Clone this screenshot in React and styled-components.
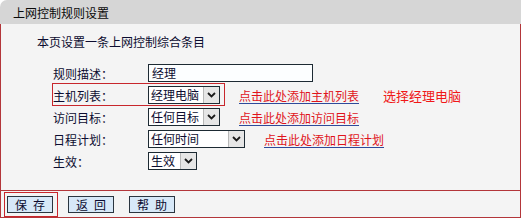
import React from "react";
import styled, { createGlobalStyle } from "styled-components";

const GlobalStyle = createGlobalStyle`
  html, body {
    margin: 0;
    padding: 0;
    background: #ffffff;
  }
  body {
    font-family: "Noto Sans CJK SC", "Liberation Sans", sans-serif;
    font-size: 12px;
    color: #0c0c30;
  }
`;

const Page = styled.div`
  width: 521px;
  display: flex;
  flex-direction: column;
`;

const Header = styled.div`
  height: 24px;
  background: #d6d6d6;
  border-top-left-radius: 7px;
  display: flex;
  align-items: center;
  padding-left: 13px;
  font-size: 12px;
  color: #0a0a0a;
`;

const Panel = styled.div`
  background: #f4f4f4;
  border-left: 1px solid #b3363a;
  border-right: 1px solid #b3363a;
  display: flex;
  flex-direction: column;
`;

const Body = styled.div`
  height: 167px;
  padding-top: 9px;
  box-sizing: border-box;
  border-bottom: 1px solid #b3363a;
  display: flex;
  flex-direction: column;
`;

const Intro = styled.div`
  padding-left: 36px;
  height: 17px;
  line-height: 17px;
  margin-bottom: 14px;
`;

const Rows = styled.div`
  display: flex;
  flex-direction: column;
  padding-left: 52px;
  gap: 4px;
`;

const Row = styled.div`
  display: flex;
  align-items: center;
  height: 18px;
`;

const Group = styled.div`
  position: relative;
  display: flex;
  align-items: center;
  height: 100%;

  ${(p) =>
    p.$mark &&
    `
    &::after {
      content: "";
      position: absolute;
      left: -1px;
      right: -5px;
      top: -3px;
      bottom: -2px;
      border: 1px solid #c8262c;
      pointer-events: none;
    }
  `}
`;

const Label = styled.span`
  width: 95px;
  white-space: nowrap;
`;

const TextBox = styled.div`
  width: 160px;
  height: 16px;
  background: #fcfeff;
  border: 1px solid #1d2a33;
  padding-left: 3px;
  line-height: 16px;
  font-size: 12px;
`;

const Select = styled.div`
  width: ${(p) => p.$w}px;
  height: 16px;
  background: #ffffff;
  border: 1px solid #1d2a33;
  display: flex;
  align-items: stretch;
`;

const SelectText = styled.span`
  flex: 1;
  padding-left: 2px;
  line-height: 16px;
  font-size: 12px;
  white-space: nowrap;
`;

const Arrow = styled.span`
  width: 15px;
  background: #e6e6e6;
  border-left: 1px solid #b8b8b8;
  display: flex;
  align-items: center;
  justify-content: center;
`;

const Link = styled.a`
  margin-left: 19px;
  color: #e0141c;
  text-decoration: underline;
  text-decoration-color: #2e4a9a;
  text-underline-offset: 2px;
  white-space: nowrap;
  cursor: pointer;
`;

const Note = styled.span`
  margin-left: 24px;
  color: #f01818;
  font-size: 13px;
  white-space: nowrap;
`;

const ButtonBar = styled.div`
  height: 26px;
  border-bottom: 1px solid #b3363a;
  display: flex;
  align-items: center;
  padding-left: 6px;
  gap: 15px;
`;

const BtnWrap = styled.span`
  position: relative;
  display: flex;

  ${(p) =>
    p.$mark &&
    `
    &::after {
      content: "";
      position: absolute;
      left: -3px;
      right: -5px;
      top: -4px;
      bottom: -4px;
      border: 1px solid #c8262c;
      pointer-events: none;
    }
  `}
`;

const Button = styled.button`
  width: 46px;
  height: 17px;
  padding: 0;
  margin: 0;
  background: #d7e8f8;
  border: 1px solid #2a3540;
  font-family: "Noto Sans CJK SC", "Liberation Sans", sans-serif;
  font-size: 12px;
  line-height: 15px;
  letter-spacing: 6px;
  text-indent: 6px;
  color: #0c0c30;
`;

function Chevron() {
  return (
    <svg width="9" height="6" viewBox="0 0 9 6">
      <path d="M1 1 L4.5 4.5 L8 1" fill="none" stroke="#1a1a1a" strokeWidth="1.8" />
    </svg>
  );
}

function Dropdown({ width, value }) {
  return (
    <Select $w={width}>
      <SelectText>{value}</SelectText>
      <Arrow>
        <Chevron />
      </Arrow>
    </Select>
  );
}

export default function App() {
  return (
    <Page>
      <GlobalStyle />
      <Header>上网控制规则设置</Header>
      <Panel>
        <Body>
          <Intro>本页设置一条上网控制综合条目</Intro>
          <Rows>
            <Row>
              <Group>
                <Label>规则描述：</Label>
                <TextBox>经理</TextBox>
              </Group>
            </Row>
            <Row>
              <Group $mark>
                <Label>主机列表：</Label>
                <Dropdown width={70} value="经理电脑" />
              </Group>
              <Link>点击此处添加主机列表</Link>
              <Note>选择经理电脑</Note>
            </Row>
            <Row>
              <Group>
                <Label>访问目标：</Label>
                <Dropdown width={70} value="任何目标" />
              </Group>
              <Link>点击此处添加访问目标</Link>
            </Row>
            <Row>
              <Group>
                <Label>日程计划：</Label>
                <Dropdown width={95} value="任何时间" />
              </Group>
              <Link>点击此处添加日程计划</Link>
            </Row>
            <Row>
              <Group>
                <Label>生效：</Label>
                <Dropdown width={47} value="生效" />
              </Group>
            </Row>
          </Rows>
        </Body>
        <ButtonBar>
          <BtnWrap $mark>
            <Button>保存</Button>
          </BtnWrap>
          <BtnWrap>
            <Button>返回</Button>
          </BtnWrap>
          <BtnWrap>
            <Button>帮助</Button>
          </BtnWrap>
        </ButtonBar>
      </Panel>
    </Page>
  );
}
